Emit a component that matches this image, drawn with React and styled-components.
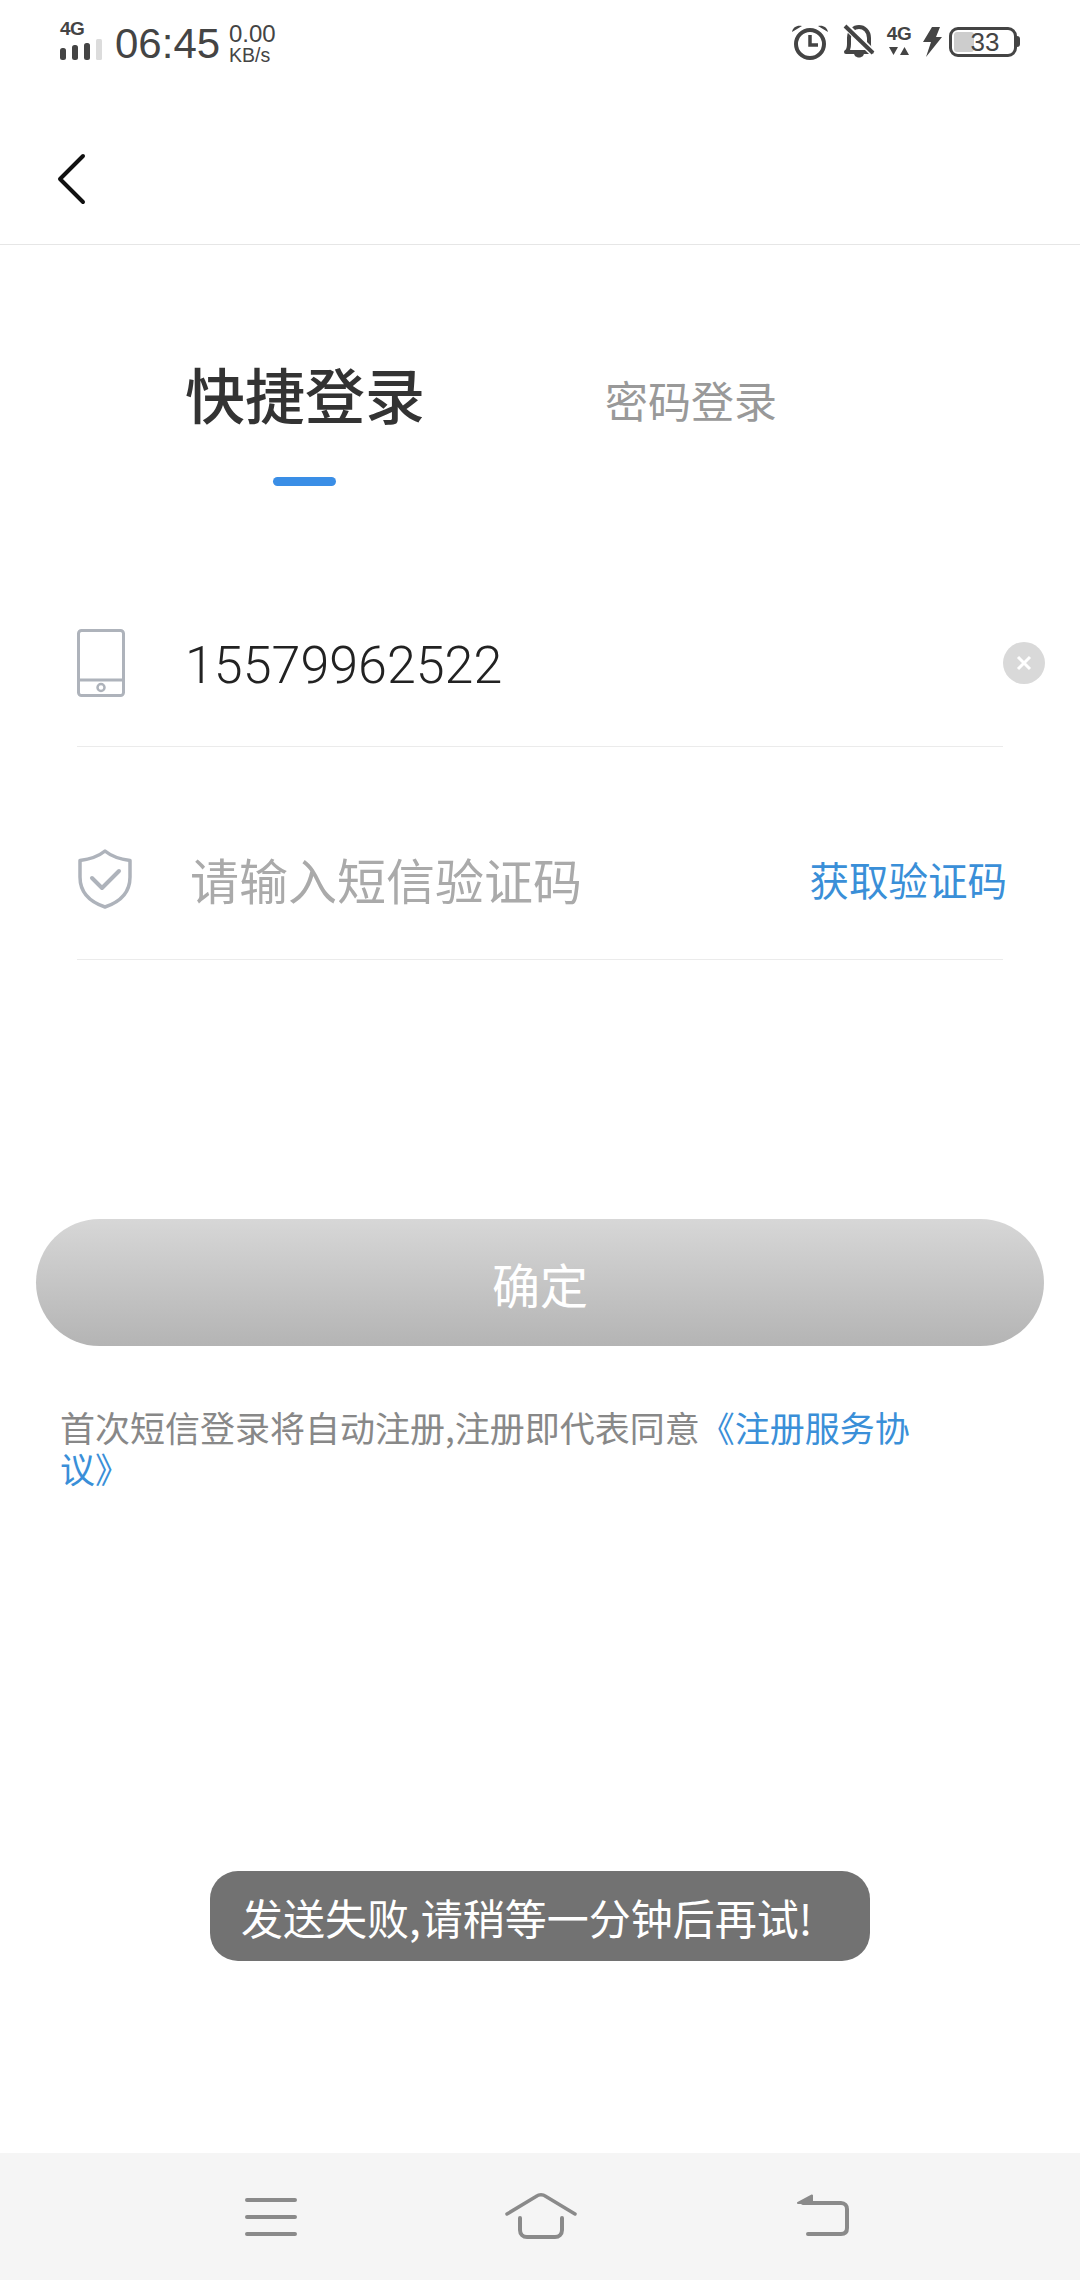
import React from "react";
import styled, { createGlobalStyle } from "styled-components";

const Global = createGlobalStyle`
  html, body { margin: 0; padding: 0; background: #fff; }
  body { font-family: "Noto Sans CJK SC", "Noto Sans", sans-serif; }
  * { box-sizing: border-box; }
`;
const Page = styled.div`
  position: relative; width: 1080px; height: 2280px; background: #fff;
  display: flex; flex-direction: column; overflow: hidden;
`;
const StatusBar = styled.div`
  height: 90px; flex: none; padding: 0 63px 0 60px; display: flex; justify-content: space-between;
  color: #444; font-family: "Liberation Sans", Arial, sans-serif;
`;
const StatusGroup = styled.div`display: flex; align-items: flex-start;`;
const SignalBox = styled.div`
  width: 43px; padding-top: 19px; display: flex; flex-direction: column; margin-right: 12px;
`;
const NetLabel = styled.span`
  font-size: 19px; font-weight: 700; line-height: 20px; letter-spacing: -0.5px;
`;
const Time = styled.span`
  font-size: 42px; line-height: 48px; padding-top: 20px; width: 114px;
`;
const Speed = styled.div`display: flex; flex-direction: column; padding-top: 22px;`;
const SpeedValue = styled.span`font-size: 24px; line-height: 23px;`;
const SpeedUnit = styled.span`font-size: 19.500px; line-height: 20px;`;
const Net4G = styled.div`
  width: 24px; margin-left: 12px; padding-top: 24px; display: flex; flex-direction: column; align-items: center;
`;
const Battery = styled.div`
  position: relative; width: 68px; height: 30px; margin-top: 27px; margin-left: 7px;
  border: 3.500px solid #444; border-radius: 9px; display: flex; align-items: center; justify-content: center;
  &::after {
    content: ""; position: absolute; right: -6px; top: 6px; width: 3.500px; height: 11px;
    background: #444; border-radius: 0 3px 3px 0;
  }
`;
const BatteryFill = styled.div`
  position: absolute; left: 2px; top: 2px; bottom: 2px; border-radius: 3px; background: #cdcdcd;
`;
const BatteryText = styled.span`position: relative; font-size: 26px; line-height: 26px; margin-left: 4px;`;
const IconSlot = styled.svg`
  display: block; flex: none; margin-top: ${p => p.$top || 0}px; margin-left: ${p => p.$left || 0}px;
`;
const Header = styled.div`
  height: 155px; flex: none; border-bottom: 1px solid #e6e6e6; padding: 63px 0 0 55px;
`;
const Tabs = styled.div`
  display: flex; padding: 108px 0 0 186px; align-items: flex-start;
`;
const ActiveTab = styled.div`
  width: 238px; display: flex; flex-direction: column; align-items: center;
`;
const ActiveLabel = styled.span`
  font-size: 60px; line-height: 80px; color: #333; font-weight: 500; white-space: nowrap;
`;
const Indicator = styled.div`
  width: 63px; height: 9px; margin-top: 44px; margin-left: -2px; border-radius: 5px; background: #3a8ee6;
`;
const InactiveTab = styled.span`
  font-size: 43px; line-height: 60px; color: #999; margin-left: 181px; margin-top: 16px; white-space: nowrap;
`;
const Form = styled.div`display: flex; flex-direction: column; padding: 0 77px; margin-top: 143px;`;
const Row = styled.div`
  position: relative; height: ${p => p.$h}px; display: flex; align-items: flex-start; border-bottom: 1px solid #ebebeb;
`;
const PhoneValue = styled.span`
  font-family: Roboto, sans-serif; font-size: 52px; font-weight: 300; line-height: 60px; color: #222;
  margin-left: 60px; margin-top: 7px;
`;
const Clear = styled.div`
  position: absolute; right: -42px; top: 13px; width: 42px; height: 42px; border-radius: 50%;
  background: #d9d9d9; display: flex; align-items: center; justify-content: center;
`;
const Placeholder = styled.span`
  font-size: 49px; line-height: 64px; color: #aaa; margin-left: 65px; margin-top: 100px; white-space: nowrap;
`;
const GetCode = styled.span`
  font-size: 39.500px; line-height: 50px; color: #3a8fd8; margin-left: auto; margin-right: -4px; margin-top: 107px; white-space: nowrap;
`;
const Submit = styled.div`
  flex: none; margin: 259px 36px 0; height: 127px; border-radius: 64px;
  background: linear-gradient(180deg, #d7d7d7 0%, #b4b4b4 100%);
  display: flex; align-items: center; justify-content: center;
  color: #fff; font-size: 48px;
`;
const Notice = styled.p`
  margin: 60px 0 0; padding: 0 150px 0 60px; font-size: 35px; line-height: 41px; color: #888;
`;
const NoticeLink = styled.span`color: #3a8fd8;`;
const Toast = styled.div`
  position: absolute; left: 210px; top: 1871px; width: 660px; height: 90px; border-radius: 28px;
  background: #727272; color: #fff; font-size: 42px; display: flex; align-items: center; padding-left: 31px; white-space: nowrap;
`;
const NavBar = styled.div`
  margin-top: auto; flex: none; height: 127px; background: #f5f5f5; display: flex; align-items: flex-start;
  padding: 40px 0 0 244px;
`;
const NavIcon = styled.svg`
  display: block; flex: none; margin-top: ${p => p.$top || 0}px; margin-left: ${p => p.$left || 0}px;
`;

const Signal = () => (
  <IconSlot width="44" height="24" viewBox="0 0 44 24" $top={-1}>
    <g fill="#444">
      <rect x="0" y="10" width="6" height="12" rx="2.500" />
      <rect x="12" y="7" width="6" height="15" rx="2.500" />
      <rect x="24" y="5" width="6" height="17" rx="2.500" />
    </g>
    <rect x="36" y="1" width="6" height="21" rx="1.500" fill="#dcdcdc" />
  </IconSlot>
);

export default function App() {
  return (
    <Page>
      <Global />
      <StatusBar>
        <StatusGroup>
          <SignalBox>
            <NetLabel>4G</NetLabel>
            <Signal />
          </SignalBox>
          <Time>06:45</Time>
          <Speed>
            <SpeedValue>0.00</SpeedValue>
            <SpeedUnit>KB/s</SpeedUnit>
          </Speed>
        </StatusGroup>
        <StatusGroup>
          <IconSlot width="36" height="36" viewBox="0 0 36 36" $top={24}>
            <circle cx="18" cy="20" r="14" fill="none" stroke="#444" strokeWidth="4" />
            <path d="M18 11v10h8" fill="none" stroke="#444" strokeWidth="3.500" />
            <path d="M0 8C1 3 5 1 10 2zM36 8C35 3 31 1 26 2z" fill="#444" />
          </IconSlot>
          <IconSlot width="32" height="34" viewBox="0 0 32 34" $top={24} $left={15}>
            <path d="M3 28c3-2 3-5 3-8v-6c0-7 5-11 10-11s10 4 10 11v6c0 3 0 6 3 8z" fill="none" stroke="#444" strokeWidth="4" strokeLinejoin="round" />
            <path d="M11 29c0 6 10 6 10 0z" fill="#444" />
            <path d="M2 1l28 28" stroke="#fff" strokeWidth="7" />
            <path d="M2 2l28 27" stroke="#444" strokeWidth="4" />
          </IconSlot>
          <Net4G>
            <NetLabel>4G</NetLabel>
            <IconSlot width="20" height="10" viewBox="0 0 20 10" $top={2}>
              <path d="M0 1h9L4.500 9zM11 9h9L15.500 1z" fill="#444" />
            </IconSlot>
          </Net4G>
          <IconSlot width="19" height="30" viewBox="0 0 19 30" $top={27} $left={12}>
            <path d="M9 0h8l-4 10h6L3 30l5-15H0z" fill="#444" />
          </IconSlot>
          <Battery>
            <BatteryFill style={{ width: "33%" }} />
            <BatteryText>33</BatteryText>
          </Battery>
        </StatusGroup>
      </StatusBar>
      <Header>
        <svg width="32" height="52" viewBox="0 0 32 52" fill="none" style={{ display: "block" }}>
          <path d="M28 3L5 26l23 23" stroke="#111" strokeWidth="4" strokeLinecap="round" strokeLinejoin="round" />
        </svg>
      </Header>
      <Tabs>
        <ActiveTab>
          <ActiveLabel>快捷登录</ActiveLabel>
          <Indicator />
        </ActiveTab>
        <InactiveTab>密码登录</InactiveTab>
      </Tabs>
      <Form>
        <Row $h={118}>
          <IconSlot width="48" height="68" viewBox="0 0 48 68">
            <rect x="1.500" y="1.500" width="45" height="65" rx="3" fill="none" stroke="#aeb3bb" strokeWidth="3" />
            <path d="M1.500 51h45" stroke="#aeb3bb" strokeWidth="3" />
            <circle cx="24" cy="58.500" r="3.500" fill="none" stroke="#aeb3bb" strokeWidth="2.500" />
          </IconSlot>
          <PhoneValue>15579962522</PhoneValue>
          <Clear>
            <svg width="16" height="16" viewBox="0 0 16 16">
              <path d="M2 2l12 12M14 2L2 14" stroke="#fff" strokeWidth="3" />
            </svg>
          </Clear>
        </Row>
        <Row $h={213}>
          <IconSlot width="56" height="60" viewBox="0 0 56 60" $top={102} style={{ marginRight: -8 }}>
            <path d="M28 2c6 5 14 8 25 9.500V28c0 15-10 25-25 30C13 53 3 43 3 28V11.500C14 10 22 7 28 2z" fill="none" stroke="#aeb3bb" strokeWidth="3.500" strokeLinejoin="round" />
            <path d="M15 29l10 10 17-17" fill="none" stroke="#aeb3bb" strokeWidth="4" strokeLinecap="round" strokeLinejoin="round" />
          </IconSlot>
          <Placeholder>请输入短信验证码</Placeholder>
          <GetCode>获取验证码</GetCode>
        </Row>
      </Form>
      <Submit>确定</Submit>
      <Notice>
        首次短信登录将自动注册,注册即代表同意<NoticeLink>《注册服务协议》</NoticeLink>
      </Notice>
      <Toast>发送失败,请稍等一分钟后再试!</Toast>
      <NavBar>
        <NavIcon width="54" height="38" viewBox="0 0 54 38" $top={5}>
          <path d="M3 2h48M3 19h48M3 36h48" stroke="#8a8a8a" strokeWidth="4" strokeLinecap="round" />
        </NavIcon>
        <NavIcon width="72" height="46" viewBox="0 0 72 46" fill="none" $left={207}>
          <path d="M2 21L31 3.500c3-2 7-2 10 0L70 21" stroke="#8a8a8a" strokeWidth="3.500" strokeLinecap="round" />
          <path d="M15 25v12c0 4 3 7 7 7h28c4 0 7-3 7-7V25" stroke="#8a8a8a" strokeWidth="4" strokeLinecap="round" />
        </NavIcon>
        <NavIcon width="56" height="46" viewBox="0 0 56 46" fill="none" $left={218}>
          <path d="M3 10L17 2.500V10z" fill="#8a8a8a" stroke="#8a8a8a" strokeWidth="2" strokeLinejoin="round" />
          <path d="M8 10h38c4 0 6 3 6 6v19c0 4-2 6-6 6H13" stroke="#8a8a8a" strokeWidth="4" strokeLinecap="round" />
        </NavIcon>
      </NavBar>
    </Page>
  );
}
